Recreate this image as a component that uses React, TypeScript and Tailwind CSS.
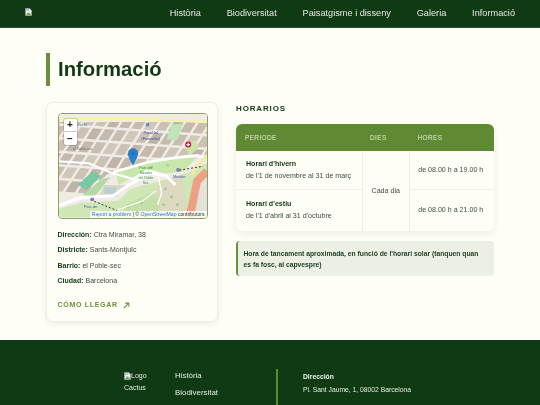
import React from "react";

function Broken() {
  return (
    <svg width="7" height="8" viewBox="0 0 14 16" className="shrink-0">
      <path d="M1 1h8l4 4v10H1z" fill="#f4f4f4" stroke="#a8a8a8" strokeWidth="1" />
      <path d="M2 2h6v4H2z" fill="#a9c4ee" />
      <path d="M2 14l4-6 3 3 1-2 2 5z" fill="#6fae5a" />
      <path d="M9 1v4h4z" fill="#d8d8d8" />
    </svg>
  );
}

function MapArt() {
  const blocks: React.ReactElement[] = [];
  const tones = ["#cbc1b4", "#c4b9ac", "#d0c7bb", "#bfb4a7", "#c8bdb0"];
  for (let i = -8; i < 16; i++) {
    for (let j = 0; j < 7; j++) {
      const ox = i * 12.4 + j * 8.4 - 6;
      const oy = 78 - j * 13.2 + i * 0.9;
      const w = 9.6;
      const hx = 6.8;
      const hy = -10.8;
      blocks.push(
        <polygon
          key={`${i}-${j}`}
          points={`${ox},${oy} ${ox + w},${oy + 0.7} ${ox + w + hx},${oy + 0.7 + hy} ${ox + hx},${oy + hy}`}
          fill={tones[(i * 3 + j * 7 + 80) % 5]}
        />
      );
    }
  }
  return (
    <svg viewBox="0 0 150 105" className="block w-full h-full" preserveAspectRatio="none">
      <defs>
        <clipPath id="city">
          <path d="M0 8 H150 V41 L100 45 L58 57 L48 62 L26 82 L0 88 Z" />
        </clipPath>
        <filter id="soft">
          <feGaussianBlur stdDeviation="0.3" />
        </filter>
      </defs>
      <g filter="url(#soft)">
        <rect width="150" height="105" fill="#f0ece5" />
        <g clipPath="url(#city)">{blocks}</g>
        <path d="M19 72 L34 58 L43 63 L28 77 Z" fill="#78c8a6" />
        <path d="M24 82 L44 66 L52 64 L36 84 Z" fill="#b4d9a4" />
        <path d="M0 105 L0 96 L22 90 L60 88 L72 76 L110 66 L128 60 L150 50 V105 Z" fill="#cfe6b6" />
        <path d="M58 58 L90 48 L140 44 L126 58 L108 60 L90 56 L72 66 L60 72 Z" fill="#c9e6ad" />
        <path d="M46 72 L70 72 L58 84 L40 84 Z" fill="#dcd6ca" />
        <rect x="46" y="74" width="12" height="7" fill="#b9cfd0" />
        <path d="M100 70 L124 62 L130 100 L96 100 Z" fill="#ddd8c0" />
        <path d="M68 92 L92 80 L104 84 L100 100 L66 100 Z" fill="#c4dfa8" />
        <g fill="#a9c98c">
          <circle cx="108" cy="76" r="1.5" />
          <circle cx="114" cy="84" r="1.6" />
          <circle cx="106" cy="92" r="1.4" />
          <circle cx="120" cy="92" r="1.5" />
          <circle cx="84" cy="90" r="1.4" />
          <circle cx="94" cy="54" r="1.2" />
          <circle cx="110" cy="52" r="1.2" />
          <circle cx="70" cy="94" r="1.2" />
        </g>
        <path d="M114 11 L126 10 L120 26 L109 26 Z" fill="#bfe5b8" />
        <path d="M128 34 L138 26 L142 34 L132 42 Z" fill="#c9e6a8" />
        <path d="M142 62 H150 V100 L140 100 Z" fill="#e4e0da" />

        <path d="M0 93 L22 85 L55 83 L69 73 L92 60 L109 63 L118 72" fill="none" stroke="#fff" strokeWidth="3" />
        <path d="M0 48 L30 50 L54 60 L75 66 L88 58 L100 60" fill="none" stroke="#fff" strokeWidth="2.2" />
        <path d="M55 59 L90 49 L120 44 L140 42 L150 45" fill="none" stroke="#fff" strokeWidth="2.6" />
        <path d="M100 60 L104 80 L100 92" fill="none" stroke="#fff" strokeWidth="1.4" />
        <path d="M58 98 L85 88 L98 78" fill="none" stroke="#fff" strokeWidth="1.1" />
        <path d="M0 5 L80 5 L150 8" fill="none" stroke="#f4f1b4" strokeWidth="3" />
        <path d="M150 42 L139 54 L135 62" fill="none" stroke="#f4e9a0" strokeWidth="3" />
        <path d="M150 58 L140 68 L135 92 L132 105" fill="none" stroke="#ee9f84" strokeWidth="8" />
        <path d="M122 57 L146 53" fill="none" stroke="#222" strokeWidth="0.9" strokeDasharray="2 2" />
        <path d="M32 87 L59 98" fill="none" stroke="#222" strokeWidth="0.9" strokeDasharray="2 2" />
        <rect x="88" y="9" width="3.5" height="3.5" fill="#5b6bb0" opacity="0.7" />
        <rect x="119" y="55" width="3.5" height="3.5" fill="#5b6bb0" opacity="0.8" />
        <rect x="32" y="85" width="3.5" height="3" fill="#5b6bb0" opacity="0.8" />
      </g>
      <g style={{ fontFamily: "'Liberation Sans', sans-serif" }} textAnchor="middle">
        <text x="93" y="20" fontSize="4" fill="#2a3f9e">Paral·lel</text>
        <text x="93" y="26" fontSize="4" fill="#2a3f9e">(Funicular)</text>
        <text x="88" y="56" fontSize="3.6" fill="#3f8a4a">Parc del</text>
        <text x="88" y="61" fontSize="3.6" fill="#3f8a4a">Mirador</text>
        <text x="88" y="66" fontSize="3.6" fill="#3f8a4a">del Poble</text>
        <text x="88" y="71" fontSize="3.6" fill="#3f8a4a">Sec</text>
        <text x="122" y="65" fontSize="3.8" fill="#4a55a5">Mirador</text>
        <text x="32" y="95" fontSize="3.8" fill="#4a55a5">Parc de</text>
        <text x="24" y="37" fontSize="3.6" fill="#6d6d6d">el Poble-sec</text>
        <text x="22" y="12" fontSize="3.6" fill="#5b6bb0">Paral·lel</text>
      </g>
      <circle cx="131" cy="31" r="3" fill="#c8102e" />
      <path d="M129.2 31h3.6M131 29.2v3.6" stroke="#fff" strokeWidth="1.2" />
      <path
        d="M75 52 C72 46 70 43 70 40 A5 5 0 0 1 80 40 C80 43 78 46 75 52 Z"
        fill="#2a81cb"
        stroke="#2270b0"
        strokeWidth="0.4"
      />
      <circle cx="75" cy="40" r="1.9" fill="#2272b5" />
    </svg>
  );
}

const nav = ["Història", "Biodiversitat", "Paisatgisme i disseny", "Galeria", "Informació"];
const details: [string, string][] = [
  ["Dirección:", "Ctra Miramar, 38"],
  ["Districte:", "Sants-Montjuïc"],
  ["Barrio:", "el Poble-sec"],
  ["Ciudad:", "Barcelona"],
];

export default function App() {
  return (
    <div className="h-[405px] w-[540px] overflow-hidden bg-[#fefef7] flex flex-col blur-[0.35px] [font-family:'Liberation_Sans',Arial,sans-serif]">
      <header className="h-[28px] shrink-0 bg-[#103a14] border-b border-[#2c5226] flex items-center justify-between pl-[25px] pr-[25px]">
        <div className="-mt-[4px]">
          <Broken />
        </div>
        <nav className="flex gap-[25.8px] text-[9.2px] leading-none text-[#e4eadf]">
          {nav.map((n) => (
            <span key={n}>{n}</span>
          ))}
        </nav>
      </header>

      <main className="flex-1 pl-[46px] pr-[46px] pt-[25px]">
        <h1 className="border-l-[4px] border-[#6a8f3e] pl-[8px] h-[33px] flex items-center text-[20.3px] leading-none font-bold text-[#103a14]">
          Informació
        </h1>

        <div className="mt-[16px] flex gap-[18px] items-start">
          <section className="w-[172px] h-[220px] shrink-0 rounded-[7px] border border-[#eeeee4] bg-[#fefef7] shadow-[0_2px_6px_rgba(0,0,0,0.08)] pt-[10px] px-[10.5px]">
            <div className="relative h-[105.5px] w-[150px] rounded-[4px] border border-[#8aa364] overflow-hidden">
              <MapArt />
              <div className="absolute left-[5px] top-[5px] w-[13px] rounded-[2px] bg-white flex flex-col items-center text-[#222] font-bold leading-none shadow-[0_0_0_1px_rgba(0,0,0,0.15)]">
                <span className="h-[13px] flex items-center justify-center text-[10px] border-b border-[#ccc] w-full">+</span>
                <span className="h-[13px] flex items-center justify-center text-[10px]">−</span>
              </div>
              <div className="absolute right-0 bottom-0 bg-white/80 pl-[2px] pr-[2px] text-[5.1px] leading-[7px] text-[#333] whitespace-nowrap">
                <span className="text-[#2a78c0]">Report a problem</span> | © <span className="text-[#2a78c0]">OpenStreetMap</span> contributors
              </div>
            </div>
            <div className="mt-[12px] flex flex-col gap-[7.6px] text-[7px] leading-[8px] text-[#3c4a3a]">
              {details.map(([a, b]) => (
                <p key={a}>
                  <b className="text-[#103a14]">{a}</b> {b}
                </p>
              ))}
            </div>
            <div className="mt-[16px] flex items-center gap-[5px] text-[7px] leading-[8px] font-bold tracking-[0.7px] text-[#6a8f3e]">
              CÓMO LLEGAR
              <svg width="7" height="7" viewBox="0 0 8 8" fill="none" stroke="#6a8f3e" strokeWidth="1.2">
                <path d="M1 7 L6.6 1.4 M2.6 1.3 H6.7 V5.4" />
              </svg>
            </div>
          </section>

          <section className="flex-1">
            <h2 className="text-[8px] leading-[10px] mt-[1.5px] font-bold tracking-[0.85px] text-[#103a14]">HORARIOS</h2>
            <div className="mt-[10.5px] rounded-[6px] overflow-hidden bg-[#fefef7] shadow-[0_3px_8px_rgba(0,0,0,0.07)] grid grid-cols-[126px_47.5px_84.5px] grid-rows-[27px_39px_41px] text-[7.1px] text-[#3c4a3a]">
              <div className="col-span-3 grid grid-cols-[126px_47.5px_84.5px] bg-[#5f8a33] items-center text-[6.5px] tracking-[0.35px] text-[#dfe9cf]">
                <span className="pl-[9px]">PERIODE</span>
                <span className="pl-[8px]">DIES</span>
                <span className="pl-[8px]">HORES</span>
              </div>
              <div className="flex flex-col justify-center pl-[10px] gap-[3px] border-b border-[#f0f0e6] leading-[9px]">
                <b className="text-[#103a14]">Horari d'hivern</b>
                <span>de l'1 de novembre al 31 de març</span>
              </div>
              <div className="row-span-2 border-x border-[#eeeee2] flex items-center justify-center">Cada dia</div>
              <div className="flex items-center justify-center pr-[2px] border-b border-[#f0f0e6]">de 08.00 h a 19.00 h</div>
              <div className="flex flex-col justify-center pl-[10px] gap-[3px] leading-[9px]">
                <b className="text-[#103a14]">Horari d'estiu</b>
                <span>de l'1 d'abril al 31 d'octubre</span>
              </div>
              <div className="flex items-center justify-center pr-[2px]">de 08.00 h a 21.00 h</div>
            </div>
            <div className="mt-[10px] h-[35px] rounded-[4px] border-l-[2px] border-[#6a8f3e] bg-[#ecf0e4] pl-[5.5px] pr-[2px] flex items-center text-[6.75px] leading-[11px] font-bold text-[#1f4122] whitespace-pre-line">
              {"Hora de tancament aproximada, en funció de l'horari solar (tanquen quan\nes fa fosc, al capvespre)"}
            </div>
          </section>
        </div>
      </main>

      <footer className="h-[65px] shrink-0 bg-[#103a14] flex text-[#e4eadf] pl-[124px] pt-[30px]">
        <div className="w-[51px] text-[7px] leading-[11px]">
          <div className="flex items-center">
            <Broken />
            <span>Logo</span>
          </div>
          <div className="mt-[1px]">Cactus</div>
        </div>
        <div className="w-[101px] pt-[0.5px] text-[7.9px] leading-[10px] flex flex-col gap-[7px]">
          <span>Història</span>
          <span>Biodiversitat</span>
        </div>
        <div className="w-[2px] bg-[#5f8a33] h-[41px] -mt-[1px] shrink-0" />
        <div className="pl-[25px] text-[6.75px] leading-[9px] pt-[2px] flex flex-col gap-[4px]">
          <b className="text-[#f0f4ea]">Dirección</b>
          <span>Pl. Sant Jaume, 1, 08002 Barcelona</span>
        </div>
      </footer>
    </div>
  );
}
